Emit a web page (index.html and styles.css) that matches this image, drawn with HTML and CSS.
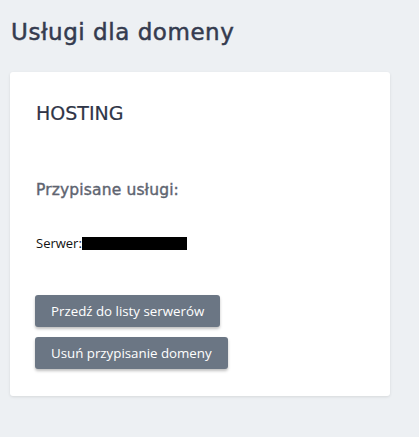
FILE: index.html
```html
<!DOCTYPE html>
<html lang="pl">
<head>
<meta charset="utf-8">
<link rel="stylesheet" href="styles.css">
</head>
<body>
<main class="page">
  <h1 class="page-title">Usługi dla domeny</h1>
  <section class="card">
    <h2 class="card-title">HOSTING</h2>
    <h3 class="section-title">Przypisane usługi:</h3>
    <p class="server">Serwer:<span class="redacted"></span></p>
    <div class="actions">
      <button class="btn">Przedź do listy serwerów</button>
      <button class="btn">Usuń przypisanie domeny</button>
    </div>
  </section>
</main>
</body>
</html>
```
FILE: styles.css
```css
html, body {
  margin: 0;
  padding: 0;
  background: #edf0f3;
  height: 100%;
}
.page {
  padding: 14px 29px 0 10px;
  font-family: "Open Sans", sans-serif;
}
.page-title {
  margin: 0 0 22px 1px;
  font-family: "DejaVu Sans", sans-serif;
  font-weight: normal;
  -webkit-text-stroke: 0.5px #343b4f;
  font-size: 23px;
  line-height: 36px;
  color: #343b4f;
  letter-spacing: 0.55px;
}
.card {
  background: #fff;
  border-radius: 3px;
  box-shadow: 0 1px 3px rgba(0,0,0,0.10);
  padding: 28px 26px 27px 25px;
  width: 329px;
}
.card-title {
  margin: 0 0 0 1px;
  font-family: "DejaVu Sans", sans-serif;
  font-weight: normal;
  -webkit-text-stroke: 0.2px #2f3547;
  font-size: 19px;
  line-height: 26px;
  color: #2f3547;
}
.section-title {
  margin: 54px 0 0 1px;
  font-family: "DejaVu Sans", sans-serif;
  font-weight: normal;
  -webkit-text-stroke: 0.4px #5e6470;
  font-size: 15.5px;
  line-height: 20px;
  color: #5e6470;
  letter-spacing: 0.15px;
}
.server {
  margin: 35px 0 0 1px;
  font-size: 13px;
  line-height: 16px;
  color: #111;
  display: flex;
  align-items: center;
}
.redacted {
  display: inline-block;
  width: 105px;
  height: 13px;
  background: #000;
}
.actions {
  margin-top: 44px;
  display: flex;
  flex-direction: column;
  align-items: flex-start;
  gap: 10px;
}
.btn {
  font-family: "Open Sans", sans-serif;
  font-size: 13.3px;
  color: #fff;
  background: #6b7684;
  border: none;
  border-radius: 3px;
  height: 32px;
  padding: 0 16px;
  box-shadow: 0 2px 3px rgba(0,0,0,0.25);
}
```
